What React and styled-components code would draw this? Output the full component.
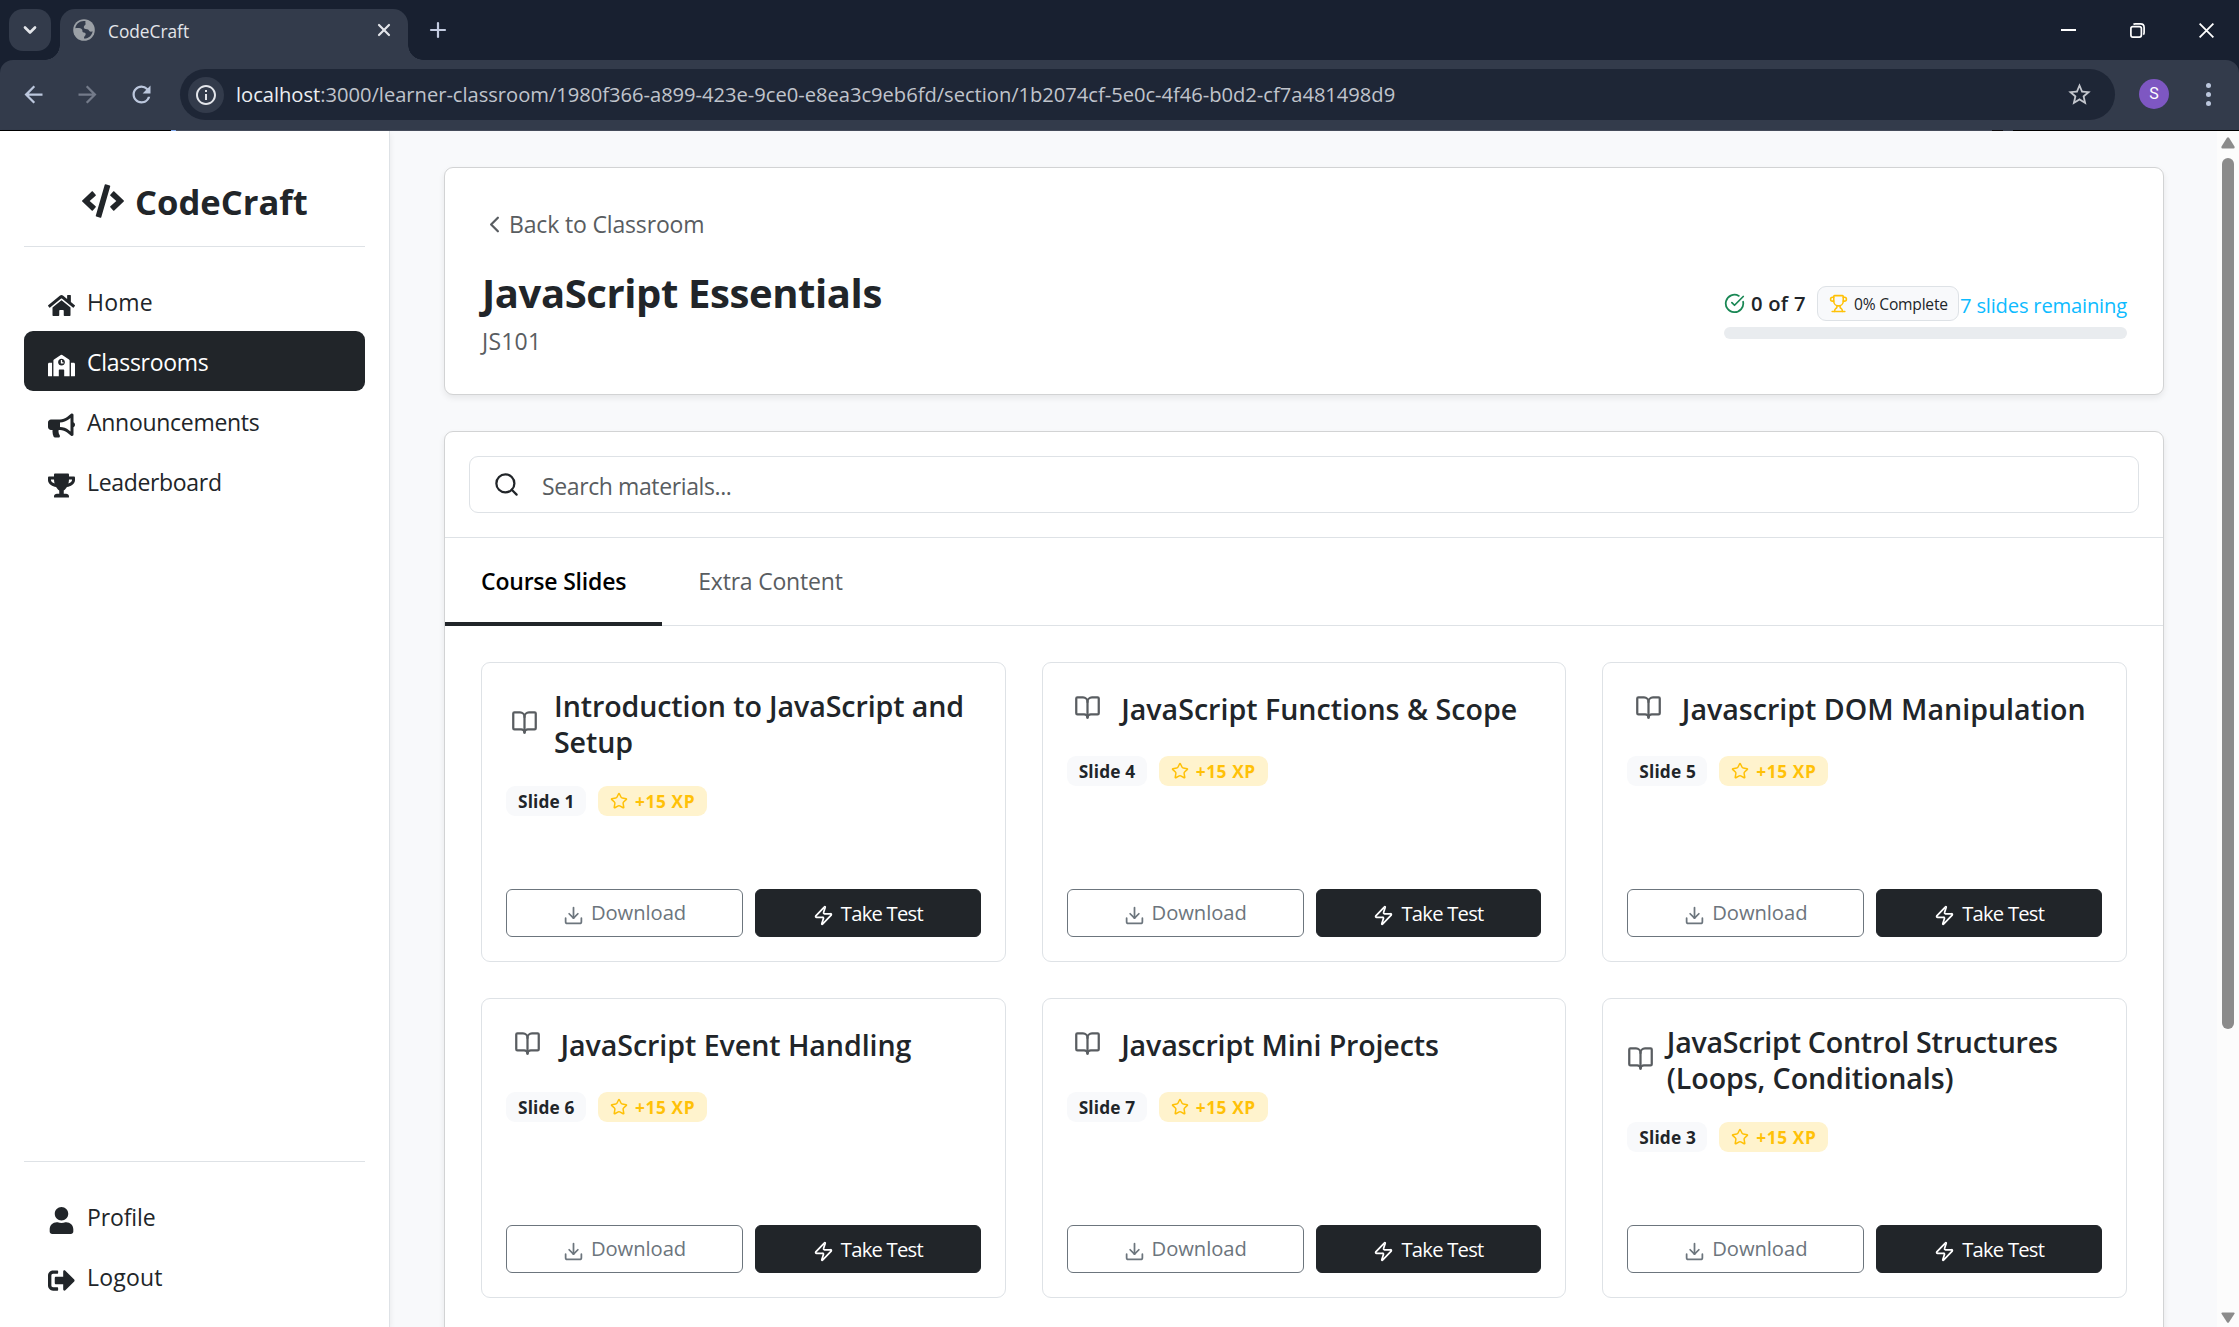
import React from "react";
import styled, { createGlobalStyle } from "styled-components";
import {
  BookOpen,
  ChevronDown,
  ChevronLeft,
  CircleCheckBig,
  Download,
  Plus,
  Search,
  Star,
  Trophy,
  X,
  Zap,
} from "lucide-react";
import {
  FaBullhorn,
  FaCode,
  FaHome,
  FaSchool,
  FaSignOutAlt,
  FaTrophy,
  FaUser,
} from "react-icons/fa";
import {
  MdArrowBack,
  MdArrowForward,
  MdInfoOutline,
  MdRefresh,
  MdStarBorder,
} from "react-icons/md";

const GlobalStyle = createGlobalStyle`
  *, *::before, *::after { box-sizing: border-box; }
  body {
    margin: 0;
    overflow: hidden;
    font-family: "Open Sans", "Noto Sans", sans-serif;
    font-size: 23px;
    line-height: 36px;
    color: #212529;
    background: #f8f9fb;
  }
  button, input { font: inherit; color: inherit; border: 0; background: none; padding: 0; margin: 0; }
  svg { display: block; flex: none; }
`;

const Window = styled.div`
  width: 2239px;
  height: 1327px;
  display: flex;
  flex-direction: column;
  overflow: hidden;
`;

/* ---------- browser chrome ---------- */

const TabStrip = styled.header`
  height: 60px;
  flex: none;
  display: flex;
  align-items: flex-start;
  padding: 9px 25px 0 9px;
  background: #182030;
`;

const TabSearch = styled.button`
  width: 42px;
  height: 42px;
  border-radius: 14px;
  background: #333b4b;
  color: #e3e5ea;
  display: flex;
  align-items: center;
  justify-content: center;
`;

const Tab = styled.div`
  position: relative;
  width: 348px;
  height: 51px;
  margin-left: 9px;
  padding: 0 14px 9px 13px;
  border-radius: 15px 15px 0 0;
  background: #333b4b;
  color: #e3e5ea;
  display: flex;
  align-items: center;

  &::before, &::after {
    content: "";
    position: absolute;
    bottom: 0;
    width: 15px;
    height: 15px;
  }
  &::before {
    left: -15px;
    background: radial-gradient(circle at 0 0, transparent 14.5px, #333b4b 15px);
  }
  &::after {
    right: -15px;
    background: radial-gradient(circle at 100% 0, transparent 14.5px, #333b4b 15px);
  }
`;

const TabTitle = styled.span`
  flex: 1;
  margin-left: 13px;
  padding-top: 4px;
  font-size: 17.3px;
  line-height: 24px;
`;

const NewTab = styled.button`
  width: 24px;
  height: 42px;
  margin-left: 18px;
  color: #c3cbe0;
  display: flex;
  align-items: center;
  justify-content: center;
`;

const WindowControls = styled.div`
  margin-left: auto;
  height: 42px;
  display: flex;
  align-items: center;
  gap: 54px;
`;

const ToolbarBack = styled.div`
  height: 71px;
  flex: none;
  background: #182030;
`;

const Toolbar = styled.div`
  height: 71px;
  padding: 9px 28px 0 19px;
  border-radius: 13px 13px 0 0;
  background: #333b4b;
  border-bottom: 1px solid #444b5a;
  display: flex;
  align-items: flex-start;
`;

const NavButton = styled.button`
  width: 28px;
  height: 51px;
  margin-right: ${(p) => p.$after}px;
  color: ${(p) => (p.$muted ? "#747b8a" : "#bcc7dd")};
  display: flex;
  align-items: center;
  justify-content: center;
`;

const Omnibox = styled.div`
  flex: 1;
  height: 51px;
  border-radius: 26px;
  background: #1e2636;
  padding: 0 22px 0 8px;
  display: flex;
  align-items: center;
`;

const SiteInfo = styled.span`
  width: 36px;
  height: 36px;
  border-radius: 50%;
  background: #333b4b;
  color: #e3e5ea;
  display: flex;
  align-items: center;
  justify-content: center;
`;

const Url = styled.span`
  flex: 1;
  margin-left: 12px;
  padding-bottom: 2px;
  font-size: 20.15px;
  line-height: 30px;
  letter-spacing: -0.02px;
  color: #c0c4cc;
  b { font-weight: 400; color: #eceef2; }
`;

const StarSlot = styled.span`
  color: #c3c6cd;
`;

const Avatar = styled.span`
  width: 30px;
  height: 30px;
  margin: 10px 0 0 24px;
  border-radius: 50%;
  background: #7e57c2;
  color: #fff;
  font: 400 16px/30px Roboto, sans-serif;
  text-align: center;
`;

const Kebab = styled.span`
  height: 51px;
  margin-left: 37px;
  display: flex;
  flex-direction: column;
  justify-content: center;
  gap: 4px;
  i { width: 5px; height: 5px; border-radius: 50%; background: #bcc7dd; }
`;

const LoadLine = styled.div`
  position: relative;
  height: 1px;
  margin-top: -1px;
  flex: none;
  display: grid;
  grid-template-columns: 171px 5px 1fr 11px 10px 226px;
`;

const LoadPart = styled.i`
  background: ${(p) => p.$tone};
`;

/* ---------- page ---------- */

const Page = styled.div`
  flex: 1;
  min-height: 0;
  display: flex;
  background: #f8f9fb;
`;

const Sidebar = styled.aside`
  width: 390px;
  flex: none;
  padding: 0 24px 21px;
  background: #fff;
  border-right: 1px solid #dee2e6;
  box-shadow: 0 3px 6px rgba(0, 0, 0, 0.075);
  display: flex;
  flex-direction: column;
`;

const Brand = styled.div`
  height: 116px;
  margin-bottom: 24px;
  padding: 44px 0 0 58px;
  border-bottom: 1px solid #dee2e6;
  display: flex;
  align-items: flex-start;
  gap: 11px;
  font-size: 34.6px;
  font-weight: 700;
  line-height: 54px;
  svg { width: 42px; height: 34px; margin-top: 9px; }
`;

const SideNav = styled.nav`
  display: flex;
  flex-direction: column;
`;

const SideFooter = styled(SideNav)`
  margin-top: auto;
  padding-top: 24px;
  border-top: 1px solid #dee2e6;
`;

const SideLink = styled.a`
  height: 60px;
  padding: 0 24px;
  border-radius: 9px;
  background: ${(p) => (p.$active ? "#212529" : "transparent")};
  color: ${(p) => (p.$active ? "#fff" : "#212529")};
  display: flex;
  align-items: center;
  gap: 12px;
  letter-spacing: ${(p) => p.$ls}px;
  svg { margin-top: 9px; }
  span { padding-top: 2px; }
`;

const Content = styled.main`
  flex: 1;
  min-width: 0;
  padding: 36px 53px 0 54px;
  display: flex;
  flex-direction: column;
  gap: 36px;
`;

const Panel = styled.section`
  background: #fff;
  border: 1px solid #d2d3d4;
  border-radius: 9px;
  box-shadow: 0 3px 6px rgba(0, 0, 0, 0.075);
`;

const HeaderPanel = styled(Panel)`
  height: 228px;
  flex: none;
  padding: 36px 36px 35px;
  display: flex;
  flex-direction: column;
  justify-content: space-between;
`;

const BackLink = styled.button`
  height: 36px;
  margin-top: 2px;
  align-self: flex-start;
  display: flex;
  align-items: center;
  gap: 1px;
  color: #595d61;
  letter-spacing: -0.16px;
  svg { margin-top: 1px; }
`;

const HeaderRow = styled.div`
  display: flex;
  justify-content: space-between;
  align-items: flex-start;
`;

const Title = styled.h1`
  margin: 0;
  padding: 2px 0 5px 1px;
  font-size: 40px;
  line-height: 50px;
  font-weight: 700;
  letter-spacing: -0.4px;
`;

const Code = styled.div`
  padding-left: 1px;
  color: #595d61;
  letter-spacing: 0.2px;
`;

const Progress = styled.div`
  width: 403px;
  padding-top: 20px;
`;

const ProgressRow = styled.div`
  height: 35px;
  display: flex;
  align-items: center;
  font-size: 20.2px;
  svg { color: #198754; }
`;

const Count = styled.span`
  width: 66px;
  margin-left: 6px;
  padding-bottom: 1px;
  font-weight: 600;
  letter-spacing: 0.25px;
`;

const CompleteBadge = styled.span`
  width: 142px;
  height: 35px;
  padding-left: 11px;
  border: 1px solid #dee2e6;
  border-radius: 9px;
  background: #f8f9fb;
  display: flex;
  align-items: center;
  gap: 6px;
  font-size: 15.6px;
  letter-spacing: -0.2px;
  white-space: nowrap;
  svg { color: #ffc107; }
`;

const Remaining = styled.span`
  margin-left: 1px;
  padding-top: 3px;
  color: #0dbbff;
  letter-spacing: -0.2px;
  white-space: nowrap;
`;

const Bar = styled.div`
  height: 12px;
  margin-top: 6px;
  border-radius: 6px;
  background: #e9ecef;
`;

const MaterialsPanel = styled(Panel)`
  height: 1100px;
  flex: none;
`;

const SearchArea = styled.div`
  padding: 24px;
  border-bottom: 1px solid #dee2e6;
`;

const SearchBox = styled.label`
  height: 57px;
  padding-left: 23px;
  border: 1px solid #dee2e6;
  border-radius: 9px;
  display: flex;
  align-items: center;
  gap: 22px;
  color: #595d61;
  letter-spacing: -0.39px;
  span { padding-top: 2px; }
  svg { color: #212529; }
`;

const Tabs = styled.div`
  height: 88px;
  border-bottom: 1px solid #dee2e6;
  display: flex;
`;

const TabButton = styled.button`
  height: 88px;
  padding: 2px 36px 0;
  color: ${(p) => (p.$active ? "#000" : "#595d61")};
  font-weight: ${(p) => (p.$active ? 600 : 400)};
  border-bottom: 4px solid ${(p) => (p.$active ? "#212529" : "transparent")};
  letter-spacing: -0.2px;
`;

const Grid = styled.div`
  padding: 36px;
  display: grid;
  grid-template-columns: repeat(3, 1fr);
  grid-auto-rows: 300px;
  gap: 36px;
`;

const Card = styled.article`
  padding: 24px;
  border: 1px solid #dee2e6;
  border-radius: 9px;
  display: flex;
  flex-direction: column;
`;

const CardHead = styled.div`
  height: ${(p) => (p.$tall ? 72 : 42)}px;
  padding-left: ${(p) => p.$inset}px;
  display: flex;
  align-items: ${(p) => (p.$tall ? "center" : "flex-start")};
  gap: ${(p) => p.$gap}px;
  svg { color: #595d61; margin-top: ${(p) => (p.$tall ? -1 : 7)}px; }
`;

const CardTitle = styled.h2`
  margin: 0;
  padding-top: ${(p) => (p.$tall ? 2 : 4)}px;
  font-size: 28.6px;
  line-height: 36px;
  font-weight: 600;
  white-space: nowrap;
`;

const TitleLine = styled.span`
  display: block;
  letter-spacing: ${(p) => p.$ls}px;
`;

const Badges = styled.div`
  margin-top: 27px;
  display: flex;
  gap: 12px;
`;

const Badge = styled.span`
  width: ${(p) => (p.$xp ? 109 : 80)}px;
  height: 30px;
  padding: 0 12px;
  border-radius: 9px;
  background: ${(p) => (p.$xp ? "#fff3cd" : "#f8f9fb")};
  color: ${(p) => (p.$xp ? "#ffc107" : "#212529")};
  font-size: 17.3px;
  font-weight: 700;
  letter-spacing: ${(p) => (p.$xp ? 0.6 : 0.15)}px;
  display: flex;
  align-items: center;
  gap: 7px;
  white-space: nowrap;
  span { padding-top: 2px; }
`;

const Actions = styled.div`
  height: 48px;
  margin-top: auto;
  display: grid;
  grid-template-columns: 237px 1fr;
  gap: 12px;
`;

const ActionButton = styled.button`
  border: 1px solid ${(p) => (p.$dark ? "#212529" : "#6c757d")};
  border-radius: 6px;
  background: ${(p) => (p.$dark ? "#212529" : "#fff")};
  color: ${(p) => (p.$dark ? "#fff" : "#6c757d")};
  font-size: 20.2px;
  letter-spacing: ${(p) => (p.$dark ? -0.75 : -0.05)}px;
  line-height: 30px;
  display: flex;
  align-items: center;
  justify-content: center;
  gap: 7px;
  svg { margin-top: 5px; }
  span { padding-bottom: ${(p) => (p.$dark ? 0 : 2)}px; }
`;

const Scrollbar = styled.div`
  width: 22px;
  flex: none;
  padding: 6px 0 4px;
  background: #fcfcfc;
  display: flex;
  flex-direction: column;
  align-items: center;
`;

const Thumb = styled.div`
  width: 12px;
  height: 871px;
  margin: 9px 0 auto;
  border-radius: 6px;
  background: #8b8b8b;
`;

const GlobeIcon = () => (
  <svg width="22" height="22" viewBox="0 0 22 22">
    <circle cx="11" cy="11" r="10.8" fill="#9ba0a6" />
    <path
      d="M12.6 2.3c-5.2-1-9.4 2.2-10.3 6.9 2.7-.4 5.6-.3 6.700 1.300.9 1.200-.2 2.600 1.700 2.900 1.800.2 2.200 1.200 1.900 2.400-.3 1.200-1.800 1.300-1.600 3.700 4.500.2 8.200-3.100 8.600-7.300-1.300.7-2.500.5-3.300-.3-.9-.9-.7-1.700-2.300-1.700-1.900 0-3.300-.7-3.200-2.200.1-1.400 1.300-1.500 1.700-2.500.3-.9-.5-1.900.1-3.200z"
      fill="#333b4b"
    />
  </svg>
);

const MinimizeIcon = () => (
  <svg width="15" height="15" viewBox="0 0 15 15">
    <path d="M0 7h15" stroke="#fff" strokeWidth="2" />
  </svg>
);

const RestoreIcon = () => (
  <svg width="15" height="15" viewBox="0 0 15 15" fill="none" stroke="#fff" strokeWidth="1.7">
    <rect x="0.9" y="3.6" width="10.5" height="10.5" rx="2" />
    <path d="M3.5 1.6Q4 .9 5.5 .9H10.5Q14.1 .9 14.1 4.5V9.5Q14.1 11 13.3 11.6" />
  </svg>
);

const CloseIcon = () => (
  <svg width="15" height="15" viewBox="0 0 15 15">
    <path d="M.6.6l13.8 13.8M14.4.6L.6 14.4" stroke="#fff" strokeWidth="1.8" />
  </svg>
);

const ArrowUp = () => (
  <svg width="14" height="12" viewBox="0 0 14 12">
    <path d="M6 .8Q7-.3 8 .8L13.5 9.5Q14 11.5 12.5 11.5H1.5Q0 11.5 .5 9.5Z" fill="#8b8b8b" />
  </svg>
);

const ArrowDown = () => (
  <svg width="14" height="11" viewBox="0 0 14 11">
    <path d="M6 10.2Q7 11.2 8 10.2L13.5 1.8Q14 .5 12.5 .5H1.5Q0 .5 .5 1.8Z" fill="#8b8b8b" />
  </svg>
);

const mainLinks = [
  { label: "Home", icon: FaHome, ls: 0.2 },
  { label: "Classrooms", icon: FaSchool, ls: -0.28, active: true },
  { label: "Announcements", icon: FaBullhorn, ls: -0.29 },
  { label: "Leaderboard", icon: FaTrophy, ls: -0.33 },
];

const footerLinks = [
  { label: "Profile", icon: FaUser, ls: -0.12 },
  { label: "Logout", icon: FaSignOutAlt, ls: 0.2 },
];

const slides = [
  {
    n: 1,
    tall: true,
    inset: 5,
    gap: 16,
    lines: [["Introduction to JavaScript and", -0.1], ["Setup", -0.1]],
  },
  { n: 4, inset: 7, gap: 20.5, lines: [["JavaScript Functions & Scope", 0]] },
  { n: 5, inset: 7.5, gap: 20, lines: [["Javascript DOM Manipulation", 0]] },
  { n: 6, inset: 7.5, gap: 20, lines: [["JavaScript Event Handling", -0.06]] },
  { n: 7, inset: 7, gap: 20.5, lines: [["Javascript Mini Projects", -0.15]] },
  {
    n: 3,
    tall: true,
    inset: 0,
    gap: 12.5,
    lines: [["JavaScript Control Structures", -0.25], ["(Loops, Conditionals)", -0.08]],
  },
];

const NavItem = ({ label, icon: Icon, ls, active }) => (
  <SideLink $active={active} $ls={ls}>
    <Icon size={27} />
    <span>{label}</span>
  </SideLink>
);

const SlideCard = ({ n, tall, inset, gap, lines }) => (
  <Card>
    <CardHead $tall={tall} $inset={inset} $gap={gap}>
      <BookOpen size={27} />
      <CardTitle $tall={tall}>
        {lines.map(([text, ls]) => (
          <TitleLine key={text} $ls={ls}>{text}</TitleLine>
        ))}
      </CardTitle>
    </CardHead>
    <Badges>
      <Badge><span>Slide {n}</span></Badge>
      <Badge $xp>
        <Star size={18} />
        <span>+15 XP</span>
      </Badge>
    </Badges>
    <Actions>
      <ActionButton>
        <Download size={21} />
        <span>Download</span>
      </ActionButton>
      <ActionButton $dark>
        <Zap size={21} />
        <span>Take Test</span>
      </ActionButton>
    </Actions>
  </Card>
);

export default function App() {
  return (
    <Window>
      <GlobalStyle />
      <TabStrip>
        <TabSearch><ChevronDown size={20} strokeWidth={3.2} /></TabSearch>
        <Tab>
          <GlobeIcon />
          <TabTitle>CodeCraft</TabTitle>
          <X size={20} strokeWidth={2.6} />
        </Tab>
        <NewTab><Plus size={24} strokeWidth={2.2} /></NewTab>
        <WindowControls>
          <MinimizeIcon />
          <RestoreIcon />
          <CloseIcon />
        </WindowControls>
      </TabStrip>
      <ToolbarBack>
        <Toolbar>
          <NavButton $after={26}><MdArrowBack size={27} /></NavButton>
          <NavButton $after={26} $muted><MdArrowForward size={27} /></NavButton>
          <NavButton $after={25}><MdRefresh size={27} /></NavButton>
          <Omnibox>
            <SiteInfo><MdInfoOutline size={24} /></SiteInfo>
            <Url>
              <b>localhost</b>:3000/learner-classroom/1980f366-a899-423e-9ce0-e8ea3c9eb6fd/section/1b2074cf-5e0c-4f46-b0d2-cf7a481498d9
            </Url>
            <StarSlot><MdStarBorder size={27} /></StarSlot>
          </Omnibox>
          <Avatar>S</Avatar>
          <Kebab><i /><i /><i /></Kebab>
        </Toolbar>
      </ToolbarBack>
      <LoadLine>
        <LoadPart $tone="#000" />
        <LoadPart $tone="#86adf0" />
        <LoadPart $tone="#444b5a" />
        <LoadPart $tone="#0c0a0c" />
        <LoadPart $tone="#39404e" />
        <LoadPart $tone="#000" />
      </LoadLine>
      <Page>
        <Sidebar>
          <Brand>
            <FaCode />
            CodeCraft
          </Brand>
          <SideNav>
            {mainLinks.map((l) => <NavItem key={l.label} {...l} />)}
          </SideNav>
          <SideFooter>
            {footerLinks.map((l) => <NavItem key={l.label} {...l} />)}
          </SideFooter>
        </Sidebar>
        <Content>
          <HeaderPanel>
            <BackLink><ChevronLeft size={27} />Back to Classroom</BackLink>
            <HeaderRow>
              <div>
                <Title>JavaScript Essentials</Title>
                <Code>JS101</Code>
              </div>
              <Progress>
                <ProgressRow>
                  <CircleCheckBig size={21} />
                  <Count>0 of 7</Count>
                  <CompleteBadge><Trophy size={19} />0% Complete</CompleteBadge>
                  <Remaining>7 slides remaining</Remaining>
                </ProgressRow>
                <Bar />
              </Progress>
            </HeaderRow>
          </HeaderPanel>
          <MaterialsPanel>
            <SearchArea>
              <SearchBox><Search size={27} /><span>Search materials...</span></SearchBox>
            </SearchArea>
            <Tabs>
              <TabButton $active>Course Slides</TabButton>
              <TabButton>Extra Content</TabButton>
            </Tabs>
            <Grid>
              {slides.map((s) => <SlideCard key={s.n} {...s} />)}
            </Grid>
          </MaterialsPanel>
        </Content>
        <Scrollbar>
          <ArrowUp />
          <Thumb />
          <ArrowDown />
        </Scrollbar>
      </Page>
    </Window>
  );
}
